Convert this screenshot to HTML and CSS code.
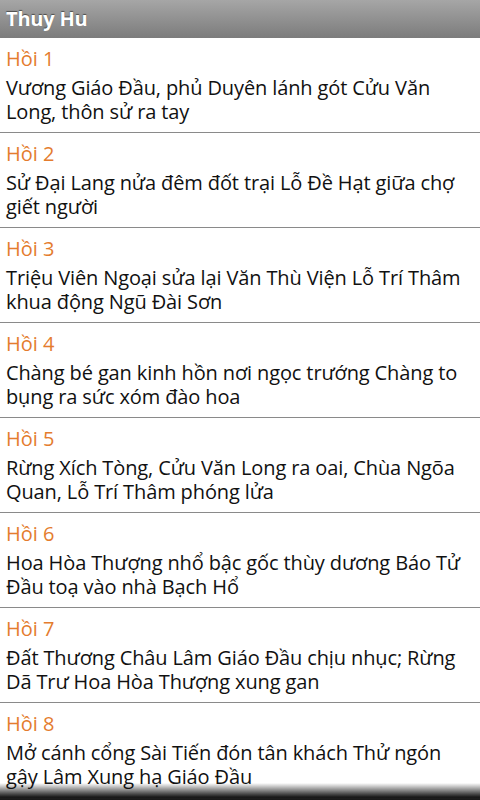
FILE: index.html
```html
<!DOCTYPE html>
<html>
<head>
<meta charset="utf-8">
<link rel="stylesheet" href="styles.css">
</head>
<body>
<div class="titlebar">Thuy Hu</div>
<ul class="list">
  <li class="item"><div class="head">Hồi 1</div><div class="desc">Vương Giáo Đầu, phủ Duyên lánh gót Cửu Văn Long, thôn sử ra tay</div></li>
  <li class="item"><div class="head">Hồi 2</div><div class="desc">Sử Đại Lang nửa đêm đốt trại Lỗ Đề Hạt giữa chợ giết người</div></li>
  <li class="item"><div class="head">Hồi 3</div><div class="desc">Triệu Viên Ngoại sửa lại Văn Thù Viện Lỗ Trí Thâm khua động Ngũ Đài Sơn</div></li>
  <li class="item"><div class="head">Hồi 4</div><div class="desc">Chàng bé gan kinh hồn nơi ngọc trướng Chàng to bụng ra sức xóm đào hoa</div></li>
  <li class="item"><div class="head">Hồi 5</div><div class="desc">Rừng Xích Tòng, Cửu Văn Long ra oai, Chùa Ngõa Quan, Lỗ Trí Thâm phóng lửa</div></li>
  <li class="item"><div class="head">Hồi 6</div><div class="desc">Hoa Hòa Thượng nhổ bậc gốc thùy dương Báo Tử Đầu toạ vào nhà Bạch Hổ</div></li>
  <li class="item"><div class="head">Hồi 7</div><div class="desc">Đất Thương Châu Lâm Giáo Đầu chịu nhục; Rừng Dã Trư Hoa Hòa Thượng xung gan</div></li>
  <li class="item"><div class="head">Hồi 8</div><div class="desc">Mở cánh cổng Sài Tiến đón tân khách Thử ngón gậy Lâm Xung hạ Giáo Đầu</div></li>
</ul>
<div class="fade"></div>
</body>
</html>
```
FILE: styles.css
```css
html, body {
  margin: 0;
  padding: 0;
  background: #fff;
  overflow: hidden;
  height: 800px;
}
body {
  font-family: "Open Sans", "DejaVu Sans", sans-serif;
}
.titlebar {
  height: 38px;
  box-sizing: border-box;
  padding-left: 6px;
  line-height: 37px;
  font-size: 20px;
  font-weight: bold;
  color: #fff;
  text-shadow: 0 -1px 1px rgba(0,0,0,0.5);
  background: linear-gradient(#a6a6a6, #7c7c7c);
  letter-spacing: -0.2px;
}
.list {
  list-style: none;
  margin: 0;
  padding: 0;
}
.item {
  padding: 8px 6px 8px 6px;
  border-bottom: 1px solid #8a8a8a;
}
.head {
  color: #e47c2e;
  font-size: 20px;
  line-height: 26px;
}
.desc {
  margin-top: 4px;
  color: #111;
  font-size: 20px;
  line-height: 24px;
  letter-spacing: -0.12px;
}
.fade {
  position: fixed;
  left: 0;
  right: 0;
  bottom: 0;
  height: 17px;
  background: linear-gradient(rgba(0,0,0,0), rgba(20,20,20,0.95) 80%, #1a1a1a);
}
```
